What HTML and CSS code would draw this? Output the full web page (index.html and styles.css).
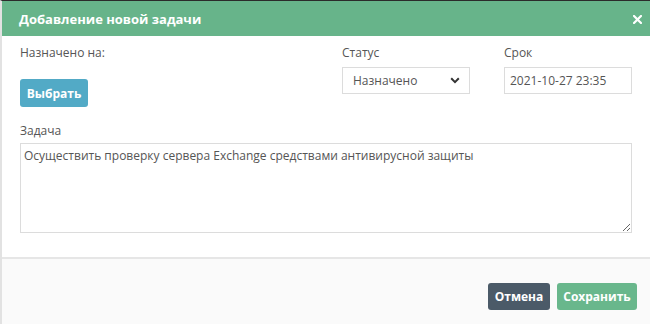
FILE: index.html
```html
<!DOCTYPE html>
<html lang="ru">
<head>
<meta charset="utf-8">
<title>Добавление новой задачи</title>
<link rel="stylesheet" href="styles.css">
</head>
<body>
<div class="modal">
  <div class="modal-header">
    <span class="modal-title">Добавление новой задачи</span>
    <span class="close">
      <svg width="9" height="9" viewBox="0 0 9 9"><path d="M1 1L8 8M8 1L1 8" stroke="#fff" stroke-width="2.2" stroke-linecap="square"/></svg>
    </span>
  </div>
  <div class="modal-body">
    <div class="row">
      <div class="col col-assign">
        <div class="label">Назначено на:</div>
        <button class="btn btn-info">Выбрать</button>
      </div>
      <div class="col col-status">
        <div class="label">Статус</div>
        <div class="select">
          <span>Назначено</span>
          <svg width="10" height="7" viewBox="0 0 10 7"><path d="M1.2 1.3L5 5.1L8.8 1.3" fill="none" stroke="#333" stroke-width="2"/></svg>
        </div>
      </div>
      <div class="col col-date">
        <div class="label">Срок</div>
        <input class="input" type="text" value="2021-10-27 23:35">
      </div>
    </div>
    <div class="label label-task">Задача</div>
    <textarea class="textarea">Осуществить проверку сервера Exchange средствами антивирусной защиты</textarea>
  </div>
  <div class="modal-footer">
    <button class="btn btn-dark">Отмена</button>
    <button class="btn btn-success">Сохранить</button>
  </div>
</div>
</body>
</html>
```
FILE: styles.css
```css
html, body {
  margin: 0;
  padding: 0;
  background: #fff;
}
body {
  font-family: "Open Sans", "DejaVu Sans", sans-serif;
  font-size: 12px;
  color: #555;
}
.modal {
  width: 650px;
  height: 324px;
  box-sizing: border-box;
  border-top: 1px solid #2b2b2b;
  border-left: 2px solid #e2e2e2;
  display: flex;
  flex-direction: column;
}
.modal-header {
  height: 35px;
  flex: none;
  background: #67b48a;
  display: flex;
  align-items: center;
  justify-content: space-between;
  padding: 0 8px 0 17px;
}
.modal-title {
  color: #fff;
  font-weight: 700;
  font-size: 13px;
}
.close {
  display: flex;
  align-items: center;
  height: 9px;
  margin-top: 2px;
}
.modal-body {
  padding: 9px 18px 24px 18px;
  border-bottom: 2px solid #e6e6e6;
  background: #fff;
}
.row {
  display: grid;
  grid-template-columns: 322px 162px 128px;
}
.col {
  display: flex;
  flex-direction: column;
  align-items: flex-start;
}
.label {
  line-height: 16px;
  color: #555;
}
.col-assign .btn {
  margin-top: 18px;
}
.col-status .select,
.col-date .input {
  margin-top: 6px;
}
.btn {
  font-family: "Open Sans", "DejaVu Sans", sans-serif;
  font-weight: 700;
  font-size: 12px;
  color: #fff;
  border: none;
  border-radius: 3px;
  height: 28px;
  padding: 0;
  cursor: pointer;
  text-align: center;
}
.btn-info {
  background: #52aac6;
  width: 68px;
}
.btn-dark {
  background: #4b5a68;
  height: 27px;
  width: 62px;
}
.btn-success {
  background: #69b78c;
  height: 27px;
  width: 80px;
}
.select {
  width: 128px;
  height: 27px;
  box-sizing: border-box;
  border: 1px solid #dcdcdc;
  display: flex;
  align-items: center;
  justify-content: space-between;
  padding: 0 9px 0 10px;
  color: #555;
  background: #fff;
}
.input {
  width: 128px;
  height: 27px;
  box-sizing: border-box;
  border: 1px solid #dcdcdc;
  padding: 0 5px;
  font-family: "Open Sans", "DejaVu Sans", sans-serif;
  font-size: 12px;
  color: #555;
  outline: none;
}
.label-task {
  margin-top: 16px;
}
.textarea {
  display: block;
  margin-top: 4px;
  width: 612px;
  height: 90px;
  box-sizing: border-box;
  border: 1px solid #dcdcdc;
  padding: 4px 3px;
  font-family: "Open Sans", "DejaVu Sans", sans-serif;
  font-size: 12px;
  line-height: 16px;
  color: #555;
  resize: vertical;
  outline: none;
}
.modal-footer {
  flex: 1;
  background: #fafafa;
  display: flex;
  justify-content: flex-end;
  align-items: flex-start;
  gap: 7px;
  padding: 24px 13px 0 0;
}
```
